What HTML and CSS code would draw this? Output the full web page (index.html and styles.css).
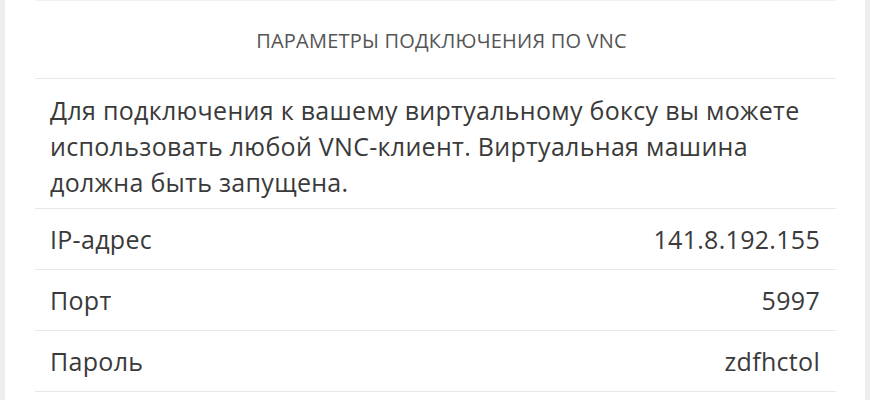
FILE: index.html
```html
<!DOCTYPE html>
<html lang="ru">
<head>
    <meta charset="UTF-8">
    <meta name="viewport" content="width=device-width, initial-scale=1.0">
    <title>Параметры VNC</title>
    <link rel="stylesheet" href="styles.css">
</head>
<body>

    <div class="panel">
        <div class="panel-head">Параметры подключения по VNC</div>

        <p class="panel-note">Для подключения к вашему виртуальному боксу вы можете использовать любой VNC-клиент. Виртуальная машина должна быть запущена.</p>

        <ul class="props">
            <li class="prop"><span>IP-адрес</span><span>141.8.192.155</span></li>
            <li class="prop"><span>Порт</span><span>5997</span></li>
            <li class="prop"><span>Пароль</span><span>zdfhctol</span></li>
        </ul>
    </div>

</body>
</html>
```

FILE: styles.css
```css
/* Connection settings panel */
body {
    font-family: "Open Sans", Arial, sans-serif;
    margin: 0;
    padding: 0;
    background-color: #eeeeee;
    color: #3a3a3a;
}
.panel {
    margin: 0 5px;
    height: 400px;
    background-color: #fff;
    padding: 0 29px 0 30px;
}
.panel-head {
    height: 79px;
    box-sizing: border-box;
    display: flex;
    align-items: center;
    justify-content: center;
    padding: 1px 0 0 12px;
    font-size: 20px;
    letter-spacing: 0.2px;
    text-transform: uppercase;
    color: #555;
    border-top: 1px solid #eef0f2;
    border-bottom: 1px solid #e6eaee;
}
.panel-note {
    margin: 0;
    padding: 13px 16px 9px 15px;
    height: 130px;
    box-sizing: border-box;
    font-size: 25px;
    letter-spacing: 0.3px;
    line-height: 36px;
    border-bottom: 1px solid #e8e8e8;
}
.props {
    list-style: none;
    margin: 0;
    padding: 0;
}
.prop {
    display: flex;
    justify-content: space-between;
    align-items: center;
    height: 61px;
    box-sizing: border-box;
    padding: 0 16px 0 15px;
    font-size: 25px;
    letter-spacing: 0.3px;
    border-bottom: 1px solid #e8e8e8;
}
```
